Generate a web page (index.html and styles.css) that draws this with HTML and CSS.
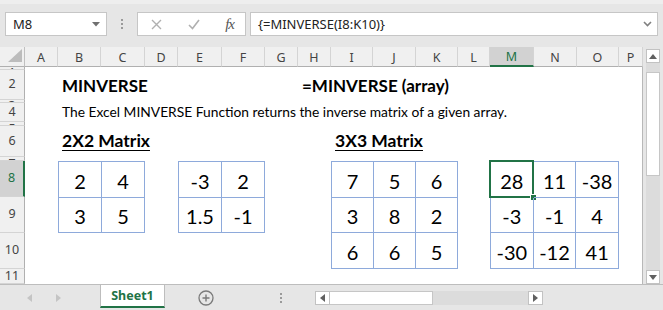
FILE: index.html
```html
<!DOCTYPE html>
<html lang="en">
<head>
  <meta charset="UTF-8" />
  <meta name="viewport" content="width=device-width, initial-scale=1.0"/>
  <title>MINVERSE</title>
  <link rel="stylesheet" href="styles.css">
</head>
<body>
  <div class="window">
    <div class="formula-bar">
      <div class="name-box">
        <span>M8</span>
        <svg class="drop" width="8" height="5" viewBox="0 0 8 5"><path d="M0 0h8L4 4.5z" fill="#707070"/></svg>
      </div>
      <div class="grip"><i></i><i></i><i></i></div>
      <div class="fx-box">
        <svg width="11" height="11" viewBox="0 0 11 11"><path d="M1 1l9 9M10 1l-9 9" stroke="#b0b0b0" stroke-width="1.4" fill="none"/></svg>
        <svg width="12" height="11" viewBox="0 0 12 11"><path d="M1 6l3.5 3.5L11 1" stroke="#b0b0b0" stroke-width="1.6" fill="none"/></svg>
        <span class="fx">fx</span>
      </div>
      <div class="formula-input">
        <span>{=MINVERSE(I8:K10)}</span>
        <svg width="9" height="6" viewBox="0 0 9 6"><path d="M1 1l3.5 3.5L8 1" stroke="#808080" stroke-width="1.6" fill="none"/></svg>
      </div>
    </div>

    <div class="work">
      <div class="sheet">
        <div class="corner">
          <svg width="14" height="13" viewBox="0 0 14 13"><path d="M14 0v13H0z" fill="#bcbcbc"/></svg>
        </div>
        <div class="col-head">A</div>
        <div class="col-head">B</div>
        <div class="col-head">C</div>
        <div class="col-head">D</div>
        <div class="col-head">E</div>
        <div class="col-head">F</div>
        <div class="col-head">G</div>
        <div class="col-head">H</div>
        <div class="col-head">I</div>
        <div class="col-head">J</div>
        <div class="col-head">K</div>
        <div class="col-head">L</div>
        <div class="col-head active">M</div>
        <div class="col-head">N</div>
        <div class="col-head">O</div>
        <div class="col-head">P</div>

        <div class="row-head thin"><span>1</span></div>
        <div class="row-head"><span>2</span></div>
        <div class="row-head thin"><span>3</span></div>
        <div class="row-head"><span>4</span></div>
        <div class="row-head thin"><span>5</span></div>
        <div class="row-head"><span>6</span></div>
        <div class="row-head thin"><span>7</span></div>
        <div class="row-head active"><span>8</span></div>
        <div class="row-head"><span>9</span></div>
        <div class="row-head"><span>10</span></div>
        <div class="row-head"><span>11</span></div>

        <div class="title">MINVERSE</div>
        <div class="syntax">=MINVERSE (array)</div>
        <div class="desc">The Excel MINVERSE Function returns the inverse matrix of a given array.</div>
        <div class="sub sub-2">2X2 Matrix</div>
        <div class="sub sub-3">3X3 Matrix</div>

        <div class="matrix m-a">
          <div>2</div><div>4</div>
          <div>3</div><div>5</div>
        </div>
        <div class="matrix m-b">
          <div>-3</div><div>2</div>
          <div>1.5</div><div>-1</div>
        </div>
        <div class="matrix three m-c">
          <div>7</div><div>5</div><div>6</div>
          <div>3</div><div>8</div><div>2</div>
          <div>6</div><div>6</div><div>5</div>
        </div>
        <div class="matrix three m-d">
          <div class="selected">28</div><div>11</div><div>-38</div>
          <div>-3</div><div>-1</div><div>4</div>
          <div>-30</div><div>-12</div><div>41</div>
        </div>
      </div>

      <div class="vscroll">
        <div class="sb-btn"><svg width="8" height="5" viewBox="0 0 8 5"><path d="M0 5h8L4 0z" fill="#606060"/></svg></div>
        <div class="v-track"><div class="v-thumb"></div></div>
        <div class="sb-btn"><svg width="8" height="5" viewBox="0 0 8 5"><path d="M0 0h8L4 5z" fill="#606060"/></svg></div>
      </div>
    </div>

    <div class="tab-bar">
      <div class="tab-nav">
        <svg width="5" height="8" viewBox="0 0 5 8"><path d="M5 0v8L0 4z" fill="#c4c4c4"/></svg>
        <svg width="5" height="8" viewBox="0 0 5 8"><path d="M0 0v8l5-4z" fill="#c4c4c4"/></svg>
      </div>
      <div class="tab">Sheet1</div>
      <div class="add-sheet">
        <svg width="16" height="16" viewBox="0 0 16 16"><circle cx="8" cy="8" r="7" stroke="#7a7a7a" stroke-width="1.3" fill="none"/><path d="M8 4.5v7M4.5 8h7" stroke="#7a7a7a" stroke-width="1.4"/></svg>
      </div>
      <div class="tab-grip"><i></i><i></i><i></i></div>
      <div class="hscroll">
        <div class="sb-btn"><svg width="5" height="8" viewBox="0 0 5 8"><path d="M5 0v8L0 4z" fill="#606060"/></svg></div>
        <div class="h-thumb"></div>
        <div class="h-track"></div>
        <div class="sb-btn"><svg width="5" height="8" viewBox="0 0 5 8"><path d="M0 0v8l5-4z" fill="#606060"/></svg></div>
      </div>
    </div>
  </div>
</body>
</html>
```

FILE: styles.css
```css
:root {
  --chrome: #e6e6e6;
  --line: #c6c6c6;
  --head-line: #d4d4d4;
  --green: #217346;
  --cell-border: #8eaadb;
}

body {
  margin: 0;
  background: var(--chrome);
  font-family: Lato, "Noto Sans", sans-serif;
  overflow: hidden;
}

.window {
  width: 663px;
  height: 310px;
  display: flex;
  flex-direction: column;
}

/* formula bar */
.formula-bar {
  height: 47px;
  box-sizing: border-box;
  padding: 12px 5px 11px 5px;
  display: flex;
  align-items: stretch;
  background: linear-gradient(#eeeeee 0, #eeeeee 4px, var(--chrome) 4px);
  font-family: "Noto Sans", sans-serif;
  font-size: 13px;
  color: #222;
}

.name-box, .fx-box, .formula-input {
  background: #fff;
  border: 1px solid var(--line);
  box-sizing: border-box;
  display: flex;
  align-items: center;
}

.name-box {
  width: 102px;
  padding: 0 6px 0 7px;
  justify-content: space-between;
}

.grip {
  width: 30px;
  display: flex;
  flex-direction: column;
  align-items: center;
  justify-content: center;
  gap: 2px;
}

.grip i, .tab-grip i {
  display: block;
  width: 2px;
  height: 2px;
  background: #9a9a9a;
}

.fx-box {
  width: 109px;
  padding: 0 11px 0 13px;
  justify-content: space-between;
}

.fx {
  font-family: "Liberation Serif", serif;
  font-style: italic;
  font-size: 15px;
  color: #555;
  letter-spacing: -1px;
}

.formula-input {
  flex: 1;
  margin-left: 4px;
  padding: 0 5px 0 7px;
  justify-content: space-between;
}

/* sheet */
.work {
  height: 237px;
  display: flex;
}

.sheet {
  width: 643px;
  background: #fff;
  display: grid;
  grid-template-columns: 25px 33px 43px 44px 33px 44px 43px 33px 33px 42px 43px 42px 32px 44px 43px 42px 24px;
  grid-template-rows: 20px 3px 30px 3px 19px 4px 31px 4px 36px 36px 36px 15px;
  overflow: hidden;
  position: relative;
}

.sheet::after {
  content: "";
  position: absolute;
  top: 20px;
  bottom: 0;
  right: 0;
  width: 1px;
  background: #b8b8b8;
}

.corner, .col-head, .row-head {
  background: #f0f0f0;
  color: #444;
  font-family: "Noto Sans", sans-serif;
  font-size: 12.5px;
  box-sizing: border-box;
}

.corner {
  display: flex;
  align-items: flex-end;
  justify-content: flex-end;
  padding: 0 2px 4px 0;
  border-right: 1px solid #c0c0c0;
  border-bottom: 1px solid #b0b0b0;
}

.col-head {
  display: flex;
  align-items: center;
  justify-content: center;
  border-right: 1px solid var(--head-line);
  border-bottom: 1px solid #b0b0b0;
  padding-top: 1px;
}

.col-head.active {
  background: #d2d2d2;
  color: var(--green);
  border-bottom: 2px solid var(--green);
}

.row-head {
  grid-column: 1;
  display: flex;
  align-items: center;
  justify-content: center;
  overflow: hidden;
  line-height: 1;
  border-right: 1px solid #b0b0b0;
  border-bottom: 1px solid var(--head-line);
}

/* hidden-looking short rows only show a sliver of their number */
.row-head.thin span {
  display: block;
  max-height: 2px;
  overflow: hidden;
}

.row-head.active {
  background: #d2d2d2;
  color: var(--green);
  border-right: 2px solid var(--green);
}

.title, .syntax, .desc, .sub {
  white-space: nowrap;
  display: flex;
  align-items: flex-end;
  padding-left: 4px;
  color: #000;
}

.title, .syntax {
  grid-row: 3;
  font-weight: bold;
  font-size: 17px;
  padding-bottom: 4px;
}

.title { grid-column: 3 / 9; }
.syntax { grid-column: 9 / 17; }

.desc {
  grid-row: 5;
  grid-column: 3 / 17;
  font-size: 13.8px;
  padding-bottom: 2px;
}

.sub {
  grid-row: 7;
  font-weight: bold;
  font-size: 17.5px;
  text-decoration: underline;
  text-underline-offset: 3px;
  padding-bottom: 6px;
}

.sub-2 { grid-column: 3 / 6; }
.sub-3 { grid-column: 10 / 13; }

/* matrices */
.matrix {
  display: grid;
  grid-template-columns: 1fr 1fr;
  border-left: 1px solid var(--cell-border);
  border-top: 1px solid var(--cell-border);
  font-size: 20px;
  color: #000;
}

.matrix div {
  display: flex;
  align-items: center;
  justify-content: center;
  border-right: 1px solid var(--cell-border);
  border-bottom: 1px solid var(--cell-border);
  padding-top: 3px;
  position: relative;
}

.matrix.three { grid-template-columns: 1fr 1fr 1fr; }

.m-a { grid-column: 3 / 5; grid-row: 9 / 11; }
.m-b { grid-column: 6 / 8; grid-row: 9 / 11; }
.m-c { grid-column: 10 / 13; grid-row: 9 / 12; }
.m-d { grid-column: 14 / 17; grid-row: 9 / 12; }

.matrix .selected::before {
  content: "";
  position: absolute;
  top: -2px;
  left: -2px;
  right: -1px;
  bottom: -1px;
  border: 2px solid var(--green);
}

.matrix .selected::after {
  content: "";
  position: absolute;
  right: -4px;
  bottom: -4px;
  width: 5px;
  height: 5px;
  background: var(--green);
  border: 1px solid #fff;
}

/* vertical scrollbar */
.vscroll {
  width: 20px;
  box-sizing: border-box;
  padding: 2px 3px 0 3px;
  display: flex;
  flex-direction: column;
}

.sb-btn {
  width: 14px;
  height: 14px;
  box-sizing: border-box;
  background: #fff;
  border: 1px solid #c2c2c2;
  display: flex;
  align-items: center;
  justify-content: center;
  flex-shrink: 0;
}

.v-track {
  flex: 1;
  background: #dcdcdc;
  padding-top: 9px;
}

.v-thumb {
  height: 104px;
  background: #fff;
  border: 1px solid #c6c6c6;
  box-sizing: border-box;
}

/* sheet tabs */
.tab-bar {
  height: 26px;
  box-sizing: border-box;
  border-top: 1px solid #bdbdbd;
  display: flex;
  align-items: stretch;
}

.tab-nav {
  width: 100px;
  display: flex;
  align-items: center;
  gap: 24px;
  padding-left: 27px;
  box-sizing: border-box;
}

.tab {
  width: 65px;
  box-sizing: border-box;
  background: #fff;
  border-left: 1px solid #bdbdbd;
  border-right: 1px solid #bdbdbd;
  border-bottom: 2px solid var(--green);
  margin-bottom: 2px;
  display: flex;
  align-items: center;
  justify-content: center;
  font-family: "Noto Sans", sans-serif;
  font-weight: bold;
  font-size: 12.5px;
  color: var(--green);
}

.add-sheet {
  width: 82px;
  display: flex;
  align-items: center;
  padding-left: 33px;
  box-sizing: border-box;
}

.tab-grip {
  width: 68px;
  display: flex;
  flex-direction: column;
  align-items: center;
  justify-content: center;
  gap: 2px;
}

.hscroll {
  width: 228px;
  height: 14px;
  margin-top: 6px;
  display: flex;
}

.hscroll .sb-btn {
  width: 15px;
  height: 14px;
}

.h-thumb {
  width: 103px;
  background: #fff;
  border-top: 1px solid #c6c6c6;
  border-bottom: 1px solid #c6c6c6;
  border-right: 1px solid #c6c6c6;
  box-sizing: border-box;
}

.h-track {
  flex: 1;
  background: #dcdcdc;
}
```
